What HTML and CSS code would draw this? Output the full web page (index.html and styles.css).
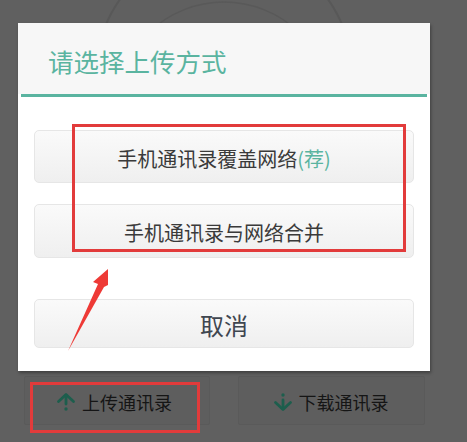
FILE: index.html
```html
<!DOCTYPE html>
<html lang="zh-CN">
<head>
<meta charset="utf-8">
<title>请选择上传方式</title>
<link rel="stylesheet" href="styles.css">
</head>
<body>
<div class="screen">
  <svg class="bg-circles" width="467" height="40" viewBox="0 0 467 40" aria-hidden="true">
    <circle cx="224" cy="74" r="128" fill="none" stroke="#585858" stroke-width="2"/>
    <circle cx="224" cy="110" r="108" fill="none" stroke="#595959" stroke-width="1.5"/>
  </svg>

  <div class="dialog">
    <div class="dlg-head">
      <h1 class="dlg-title">请选择上传方式</h1>
    </div>
    <div class="dlg-rule"></div>
    <div class="dlg-body">
      <button class="opt opt-first">手机通讯录覆盖网络<span class="rec">(荐)</span></button>
      <button class="opt opt-second">手机通讯录与网络合并</button>
      <button class="cancel">取消</button>
    </div>
  </div>

  <div class="bottom-bar">
    <div class="action action-up">
      <svg class="act-icon" width="20" height="20" viewBox="0 0 20 20" aria-hidden="true">
        <path d="M2.5 9.5 L10 2.5 L17.5 9.5" fill="none" stroke="#1d5e4d" stroke-width="2.8" stroke-linecap="round" stroke-linejoin="round"/>
        <line x1="10" y1="3.5" x2="10" y2="12" stroke="#1d5e4d" stroke-width="2.8" stroke-linecap="round"/>
        <circle cx="10" cy="17" r="1.7" fill="#1d5e4d"/>
      </svg>
      <span class="act-label">上传通讯录</span>
    </div>
    <div class="action action-down">
      <svg class="act-icon" width="20" height="20" viewBox="0 0 20 20" aria-hidden="true">
        <circle cx="10" cy="3" r="1.7" fill="#1d5e4d"/>
        <line x1="10" y1="8" x2="10" y2="16.5" stroke="#1d5e4d" stroke-width="2.8" stroke-linecap="round"/>
        <path d="M2.5 10.5 L10 17.5 L17.5 10.5" fill="none" stroke="#1d5e4d" stroke-width="2.8" stroke-linecap="round" stroke-linejoin="round"/>
      </svg>
      <span class="act-label">下载通讯录</span>
    </div>
  </div>

  <div class="mark mark-options"></div>
  <div class="mark mark-upload"></div>
  <svg class="mark-arrow" width="467" height="442" viewBox="0 0 467 442" aria-hidden="true">
    <polygon points="108,269 108,285 104,287 68,351 98,284 93,282" fill="#ee3a36"/>
  </svg>
</div>
</body>
</html>
```

FILE: styles.css
```css
* {
  box-sizing: border-box;
}

html, body {
  margin: 0;
  padding: 0;
  background: #606060;
}

.screen {
  position: relative;
  width: 467px;
  height: 442px;
  overflow: hidden;
  background: #606060;
  font-family: "Noto Sans CJK SC", "Noto Sans", "Liberation Sans", sans-serif;
  display: flex;
  flex-direction: column;
  padding-top: 23px;
}

.bg-circles {
  position: absolute;
  left: 0;
  top: 0;
}

.dialog {
  position: relative;
  width: 412px;
  margin-left: 18px;
  background: #ffffff;
  box-shadow: 1px 2px 3px rgba(0, 0, 0, 0.35);
  display: flex;
  flex-direction: column;
}

.dlg-head {
  height: 71px;
  background: #f7f7f7;
  display: flex;
  align-items: center;
  padding: 5px 0 0 30px;
}

.dlg-title {
  margin: 0;
  font-size: 25.5px;
  font-weight: 400;
  color: #5ab4a0;
  line-height: 1;
}

.dlg-rule {
  height: 3px;
  margin: 0 3px;
  background: #5ab4a0;
}

.dlg-body {
  display: flex;
  flex-direction: column;
  padding: 33px 16px 23px;
}

.opt,
.cancel {
  font-family: inherit;
  display: flex;
  align-items: center;
  justify-content: center;
  width: 100%;
  margin: 0;
  border: 1px solid #e6e6e6;
  border-radius: 5px;
  background: linear-gradient(#fafafa, #efefef);
  color: #3a3a3a;
  line-height: 1;
  cursor: pointer;
}

.opt {
  font-size: 20px;
  padding: 4px 0 0;
}

.opt-first {
  height: 53px;
}

.opt-second {
  height: 54px;
  margin-top: 21px;
}

.rec {
  color: #5ab4a0;
}

.cancel {
  height: 49px;
  margin-top: 41px;
  font-size: 24px;
  color: #3f4650;
  padding: 3px 0 0;
}

.bottom-bar {
  display: flex;
  gap: 28px;
  margin-top: 5px;
  padding-left: 24px;
}

.action {
  height: 49px;
  display: flex;
  align-items: center;
  justify-content: center;
  gap: 6px;
  background: #5e5e5e;
  border: 1px solid #5a5a5a;
  border-radius: 2px;
  padding-top: 3px;
}

.action-up {
  width: 186px;
  padding-right: 6px;
}

.action-down {
  width: 187px;
  padding-right: 2px;
}

.act-icon {
  display: block;
}

.act-label {
  font-size: 18px;
  color: #151515;
  line-height: 1;
}

.mark {
  position: absolute;
  border: 3px solid #e23b3b;
}

.mark-options {
  left: 72px;
  top: 124px;
  width: 334px;
  height: 128px;
}

.mark-upload {
  left: 30px;
  top: 382px;
  width: 170px;
  height: 51px;
}

.mark-arrow {
  position: absolute;
  left: 0;
  top: 0;
}
```
